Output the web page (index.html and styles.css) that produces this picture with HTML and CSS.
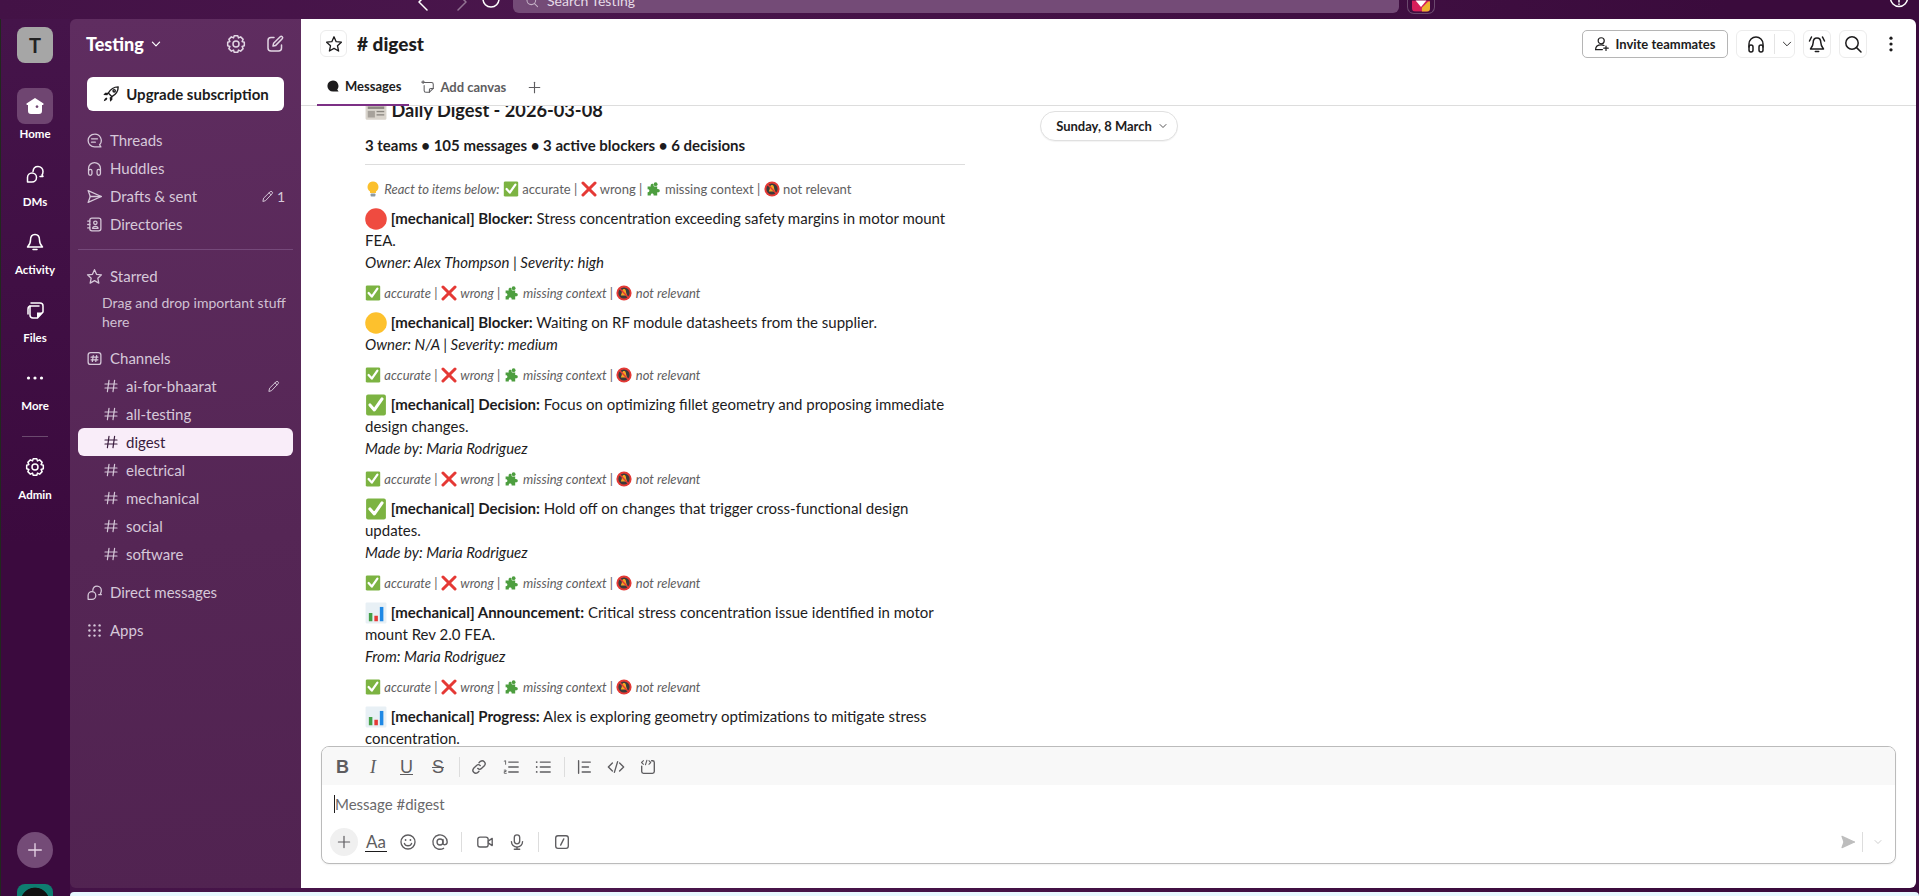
FILE: index.html
```html
<!DOCTYPE html>
<html lang="en">
<head>
    <meta charset="UTF-8">
    <meta name="viewport" content="width=device-width, initial-scale=1.0">
    <title>digest - Testing</title>
    <link rel="stylesheet" href="styles.css">
</head>
<body>
    <svg class="defs" aria-hidden="true">
        <symbol id="i-back" viewBox="0 0 20 19"><path d="M14 -6 L6 2 L14 10"/></symbol>
        <symbol id="i-fwd" viewBox="0 0 20 19"><path d="M6 -6 L14 2 L6 10"/></symbol>
        <symbol id="i-history" viewBox="0 0 20 19"><circle cx="10" cy="-1" r="8"/></symbol>
        <symbol id="i-help" viewBox="0 0 20 19"><circle cx="10" cy="-2" r="8.5"/><path d="M10 -1 V2"/><path d="M10 4 V4.6"/></symbol>
        <symbol id="i-search" viewBox="0 0 20 20"><circle cx="9" cy="9" r="6.2"/><path d="M13.6 13.6 L18 18"/></symbol>
        <symbol id="i-home" viewBox="0 0 20 20"><path class="solid" fill-rule="evenodd" d="M10 2 L18.5 7.6 Q19 8.3 18 9 L17 9 V15 Q17 18 14 18 H6 Q3 18 3 15 V9 L2 9 Q1 8.3 1.5 7.6 Z M12 9.2 a1.4 1.4 0 1 0 .01 0 Z"/></symbol>
        <symbol id="i-dms" viewBox="0 0 20 20"><path d="M8 7.5 C8.3 4 10.5 2.5 13 2.5 C16 2.5 18 5 18 7.5 C18 9 17.7 10 17 11 L18 12.5 H15"/><path d="M2.5 13.5 A4.5 4.5 0 1 1 7 18 H2.5 Z"/></symbol>
        <symbol id="i-bell" viewBox="0 0 20 20"><path d="M10 2.5 C6.5 2.5 5.5 5.5 5.5 8 C5.5 11 4.5 13 2.5 15 H17.5 C15.5 13 14.5 11 14.5 8 C14.5 5.5 13.5 2.5 10 2.5 Z"/><path d="M8 17.5 H12"/></symbol>
        <symbol id="i-bell-on" viewBox="0 0 20 20"><path d="M10 4 C7.2 4 6.2 6.5 6.2 8.6 C6.2 11 5.2 13 3.5 15 H16.5 C14.8 13 13.8 11 13.8 8.6 C13.8 6.5 12.8 4 10 4 Z"/><path d="M8.3 17.5 H11.7"/><path d="M2.5 7 L4.5 3"/><path d="M17.5 7 L15.5 3"/></symbol>
        <symbol id="i-files" viewBox="0 0 20 20"><path d="M6 3 H15 A3 3 0 0 1 18 6 V12 L12.5 18 H8 A3 3 0 0 1 5 15 V6"/><path d="M14 6 H6 A3 3 0 0 0 3 9 V14"/><path class="solid" d="M12 12.5 H18 L12.5 18 H12 Z"/></symbol>
        <symbol id="i-more" viewBox="0 0 20 20"><circle class="solid" cx="3.5" cy="10" r="1.6"/><circle class="solid" cx="10" cy="10" r="1.6"/><circle class="solid" cx="16.5" cy="10" r="1.6"/></symbol>
        <symbol id="i-kebab" viewBox="0 0 20 20"><circle class="solid" cx="10" cy="3.5" r="1.8"/><circle class="solid" cx="10" cy="10" r="1.8"/><circle class="solid" cx="10" cy="16.5" r="1.8"/></symbol>
        <symbol id="i-gear" viewBox="0 0 20 20"><path d="M8.23 1.69 L11.77 1.69 L12.53 3.9 L14.63 2.87 L17.13 5.37 L16.1 7.47 L18.31 8.23 L18.31 11.77 L16.1 12.53 L17.13 14.63 L14.63 17.13 L12.53 16.1 L11.77 18.31 L8.23 18.31 L7.47 16.1 L5.37 17.13 L2.87 14.63 L3.9 12.53 L1.69 11.77 L1.69 8.23 L3.9 7.47 L2.87 5.37 L5.37 2.87 L7.47 3.9 Z"/><circle cx="10" cy="10" r="3"/></symbol>
        <symbol id="i-compose" viewBox="0 0 20 20"><path d="M9 3.5 H6 A3 3 0 0 0 3 6.5 V14 A3 3 0 0 0 6 17 H13.5 A3 3 0 0 0 16.5 14 V11"/><path d="M8 12 L8.6 9.3 L15.2 2.8 A1.4 1.4 0 0 1 17.2 4.8 L10.7 11.4 Z"/></symbol>
        <symbol id="i-chevron" viewBox="0 0 20 20"><path d="M4 7 L10 13 L16 7"/></symbol>
        <symbol id="i-rocket" viewBox="0 0 20 20"><path d="M18 2 C13 2 9.5 4.5 7 9 L11 13 C15.5 10.5 18 7 18 2 Z"/><path class="solid" d="M7.5 8.5 H3.5 L1.5 11 L6 11.5 Z M11.5 12.5 V16.5 L9 18.5 L8.5 14 Z M5 14 C3.5 14.5 2.5 16 2 18 C4 17.5 5.5 16.5 6 15 Z"/><circle cx="13.5" cy="6.5" r="1.3"/></symbol>
        <symbol id="i-threads" viewBox="0 0 20 20"><path d="M10 2.5 A7.5 7.5 0 1 0 10 17.5 H17.5 L16 15 A7.5 7.5 0 0 0 10 2.5 Z"/><path d="M6.5 8 H13.5"/><path d="M6.5 12 H11"/></symbol>
        <symbol id="i-headphones" viewBox="0 0 20 20"><path d="M3 13 V10 A7 7 0 0 1 17 10 V13"/><rect x="3" y="11" width="4" height="7" rx="2"/><rect x="13" y="11" width="4" height="7" rx="2"/></symbol>
        <symbol id="i-send" viewBox="0 0 20 20"><path d="M2.5 3 L18 10 L2.5 17 L5 10 Z"/><path d="M5 10 H18"/></symbol>
        <symbol id="i-directory" viewBox="0 0 20 20"><rect x="4.5" y="2.5" width="13" height="15" rx="2.5"/><circle cx="11" cy="8" r="2"/><path d="M7.8 14.5 C8 11.5 14 11.5 14.2 14.5 Z"/><path d="M2 6 H4.5"/><path d="M2 10 H4.5"/><path d="M2 14 H4.5"/></symbol>
        <symbol id="i-pencil" viewBox="0 0 20 20"><path d="M3 17 L4 12.5 L14 2.8 A1.9 1.9 0 0 1 17 5.8 L7.4 16 Z"/><path d="M12.5 4.5 L15.5 7.5"/></symbol>
        <symbol id="i-star" viewBox="0 0 20 20"><path d="M10 2 L12.4 7.4 L18.2 8 L13.9 12 L15.1 17.8 L10 14.8 L4.9 17.8 L6.1 12 L1.8 8 L7.6 7.4 Z"/></symbol>
        <symbol id="i-channels" viewBox="0 0 20 20"><rect x="2.5" y="3" width="15" height="14" rx="3"/><path d="M8.5 6.5 L7.5 13.5"/><path d="M12.5 6.5 L11.5 13.5"/><path d="M6 8.5 H14"/><path d="M6 11.5 H14"/></symbol>
        <symbol id="i-hash" viewBox="0 0 20 20"><path d="M7.5 3 L5.5 17"/><path d="M14.5 3 L12.5 17"/><path d="M2.5 7.5 H17.5"/><path d="M2.5 12.5 H17.5"/></symbol>
        <symbol id="i-apps" viewBox="0 0 20 20"><g class="solid"><circle cx="4" cy="4" r="1.4"/><circle cx="10" cy="4" r="1.4"/><circle cx="16" cy="4" r="1.4"/><circle cx="4" cy="10" r="1.4"/><circle cx="10" cy="10" r="1.4"/><circle cx="16" cy="10" r="1.4"/><circle cx="4" cy="16" r="1.4"/><circle cx="10" cy="16" r="1.4"/><circle cx="16" cy="16" r="1.4"/></g></symbol>
        <symbol id="i-plus" viewBox="0 0 20 20"><path d="M10 3 V17"/><path d="M3 10 H17"/></symbol>
        <symbol id="i-bubble" viewBox="0 0 20 20"><path class="solid" d="M10 2 A8 8 0 1 0 10 18 H18 L16 15 A8 8 0 0 0 10 2 Z"/></symbol>
        <symbol id="i-canvas" viewBox="0 0 20 20"><path d="M5 3.5 H15 A2.5 2.5 0 0 1 17.5 6 V12 L12 17.5 H7 A2.5 2.5 0 0 1 4.5 15 V8"/><path d="M12 17.5 V14 A2 2 0 0 1 14 12 H17.5"/><path d="M3 1 V5"/><path d="M1 3 H5"/></symbol>
        <symbol id="i-invite" viewBox="0 0 20 20"><circle cx="9" cy="6" r="3.8"/><path d="M2 17 C2 12.5 5 11 9 11 C10.5 11 11.5 11.2 12.5 11.8"/><path d="M2 17 H10.5"/><path d="M15 12.5 V18"/><path d="M12.2 15.2 H17.8"/></symbol>
        <symbol id="i-link" viewBox="0 0 20 20"><path d="M8.5 11.5 A3.2 3.2 0 0 0 13 11.5 L16.2 8.3 A3.3 3.3 0 0 0 11.6 3.7 L10 5.3"/><path d="M11.5 8.5 A3.2 3.2 0 0 0 7 8.5 L3.8 11.7 A3.3 3.3 0 0 0 8.4 16.3 L10 14.7"/></symbol>
        <symbol id="i-ol" viewBox="0 0 20 20"><path d="M7.5 4.5 H18"/><path d="M7.5 10 H18"/><path d="M7.5 15.5 H18"/><path d="M2.5 3.5 L4 3 V7" stroke-width="1"/><path d="M2.5 13.5 H4.5 V15 H2.5 V17 H4.8" stroke-width="1"/></symbol>
        <symbol id="i-ul" viewBox="0 0 20 20"><path d="M7 4.5 H18"/><path d="M7 10 H18"/><path d="M7 15.5 H18"/><circle class="solid" cx="3" cy="4.5" r="1"/><circle class="solid" cx="3" cy="10" r="1"/><circle class="solid" cx="3" cy="15.5" r="1"/></symbol>
        <symbol id="i-quote" viewBox="0 0 20 20"><path d="M4 3 V17"/><path d="M8 4.5 H17"/><path d="M8 10 H15"/><path d="M8 15.5 H17"/></symbol>
        <symbol id="i-code" viewBox="0 0 20 20"><path d="M6 5.5 L1.5 10 L6 14.5"/><path d="M14 5.5 L18.5 10 L14 14.5"/><path d="M11.8 4 L8.2 16"/></symbol>
        <symbol id="i-codeblock" viewBox="0 0 20 20"><path d="M3 9 V15 A2 2 0 0 0 5 17 H15 A2 2 0 0 0 17 15 V5 A2 2 0 0 0 15 3 H14"/><path d="M5 3 L2.8 5 L5 7" stroke-width="1.2"/><path d="M11 3 L13 5 L11 7" stroke-width="1.2"/><path d="M8.8 2.5 L7.2 7.5" stroke-width="1.2"/></symbol>
        <symbol id="i-smile" viewBox="0 0 20 20"><circle cx="10" cy="10" r="7.8"/><path d="M6 11.5 C7 15 13 15 14 11.5"/><circle class="solid" cx="7.3" cy="7.8" r="1"/><circle class="solid" cx="12.7" cy="7.8" r="1"/></symbol>
        <symbol id="i-at" viewBox="0 0 20 20"><circle cx="10" cy="10" r="3.3"/><path d="M13.3 7 V11.5 C13.3 14 18 13.5 18 10 A8 8 0 1 0 14 17"/></symbol>
        <symbol id="i-video" viewBox="0 0 20 20"><rect x="2" y="4.5" width="11.5" height="11" rx="2.5"/><path d="M13.5 9 L18 6 V14 L13.5 11"/></symbol>
        <symbol id="i-mic" viewBox="0 0 20 20"><rect x="7" y="2" width="6" height="10" rx="3"/><path d="M3.8 9.5 A6.2 6.2 0 0 0 16.2 9.5"/><path d="M10 15.7 V18"/><path d="M7 18 H13"/></symbol>
        <symbol id="i-slash" viewBox="0 0 20 20"><rect x="3" y="3" width="14" height="14" rx="2.5"/><path d="M12 6.5 L8.5 13.5"/></symbol>

        <symbol id="e-news" viewBox="0 0 20 20"><g class="flat"><rect x="0.5" y="3" width="19" height="14" rx="1" fill="#d9d4cc"/><rect x="2.5" y="5" width="15" height="2.2" fill="#8b8780"/><rect x="2.5" y="9" width="6.5" height="6" fill="#a7a29b"/><rect x="10.5" y="9" width="7" height="1.2" fill="#8b8780"/><rect x="10.5" y="12" width="7" height="1.2" fill="#8b8780"/></g></symbol>
        <symbol id="e-bulb" viewBox="0 0 20 20"><g class="flat"><path d="M10 0.5 A6.8 6.8 0 0 0 6.3 13 V15 H13.7 V13 A6.8 6.8 0 0 0 10 0.5 Z" fill="#fbc02d"/><rect x="7" y="15.5" width="6" height="4" rx="1" fill="#8d9aa3"/></g></symbol>
        <symbol id="e-check" viewBox="0 0 20 20"><g class="flat"><rect x="1" y="0.5" width="18" height="19" rx="1.8" fill="#7cb342"/><path d="M4.5 10 L8.5 14.5 L15.5 4.5" fill="none" stroke="#fff" stroke-width="2.8"/></g></symbol>
        <symbol id="e-cross" viewBox="0 0 20 20"><g class="flat"><path d="M2.5 2.5 L17.5 17.5" fill="none" stroke="#e53935" stroke-width="3.8"/><path d="M17.5 2.5 L2.5 17.5" fill="none" stroke="#e53935" stroke-width="3.8"/></g></symbol>
        <symbol id="e-puzzle" viewBox="0 0 20 20"><g class="flat"><path d="M2 7 H6 C4.5 3 10 2 9.5 6 L10 7 H14 V10 C18 9 18.5 15 14.5 14 L14 14.5 V18 H9.5 C10 15 5.5 15 6 18 H2 V14 C5 14.5 5 10 2 10.5 Z" fill="#4d9e3f"/><circle cx="12" cy="4" r="2.4" fill="#4d9e3f"/></g></symbol>
        <symbol id="e-nobell" viewBox="0 0 20 20"><g class="flat"><circle cx="10" cy="10" r="9.5" fill="#e53935"/><circle cx="10" cy="10" r="7" fill="#3c3a3a"/><path d="M10 5 C7.5 5 7.5 8 7.2 10 L6 13 H14 L12.8 10 C12.5 8 12.5 5 10 5 Z" fill="#f5a623"/><path d="M4.5 4.5 L15.5 15.5" fill="none" stroke="#e53935" stroke-width="1.8"/></g></symbol>
        <symbol id="e-red" viewBox="0 0 20 20"><g class="flat"><circle cx="10" cy="10" r="9.8" fill="#ef4b40"/></g></symbol>
        <symbol id="e-yellow" viewBox="0 0 20 20"><g class="flat"><circle cx="10" cy="10" r="9.8" fill="#fdc12d"/></g></symbol>
        <symbol id="e-chart" viewBox="0 0 20 20"><g class="flat"><rect x="0.5" y="0.5" width="19" height="19" rx="1" fill="#e8f0f5"/><rect x="3.5" y="10" width="3.2" height="7.5" fill="#43a047"/><rect x="8.5" y="12.5" width="3.2" height="5" fill="#e53935"/><rect x="13.5" y="4.5" width="3.2" height="13" fill="#1e88e5"/></g></symbol>
    </svg>

    <div class="app">
        <div class="topbar">
            <svg class="ic nav-ic"><use href="#i-back"/></svg>
            <svg class="ic nav-ic dim"><use href="#i-fwd"/></svg>
            <svg class="ic nav-ic history"><use href="#i-history"/></svg>
            <div class="search">
                <svg class="ic ic-14"><use href="#i-search"/></svg>
                <span>Search Testing</span>
            </div>
            <div class="app-badge">
                <svg class="app-badge-mark" viewBox="0 0 20 12">
                    <rect width="20" height="12" fill="#d81e5b"/>
                    <polygon points="4,0 16,0 10,7" fill="#fff"/>
                    <polygon points="11,8 18,1 20,1 20,12 11,12" fill="#ecb22e"/>
                </svg>
            </div>
            <svg class="ic nav-ic help"><use href="#i-help"/></svg>
        </div>

        <nav class="rail">
            <div class="workspace-tile">T</div>
            <div class="rail-item active">
                <div class="rail-icon"><svg class="ic ic-20"><use href="#i-home"/></svg></div>
                <span>Home</span>
            </div>
            <div class="rail-item">
                <div class="rail-icon"><svg class="ic ic-20"><use href="#i-dms"/></svg></div>
                <span>DMs</span>
            </div>
            <div class="rail-item">
                <div class="rail-icon"><svg class="ic ic-20"><use href="#i-bell"/></svg></div>
                <span>Activity</span>
            </div>
            <div class="rail-item">
                <div class="rail-icon"><svg class="ic ic-20"><use href="#i-files"/></svg></div>
                <span>Files</span>
            </div>
            <div class="rail-item">
                <div class="rail-icon"><svg class="ic ic-20"><use href="#i-more"/></svg></div>
                <span>More</span>
            </div>
            <div class="rail-divider"></div>
            <div class="rail-item">
                <div class="rail-icon"><svg class="ic ic-20"><use href="#i-gear"/></svg></div>
                <span>Admin</span>
            </div>
            <div class="rail-add"><svg class="ic ic-18"><use href="#i-plus"/></svg></div>
            <div class="rail-avatar"></div>
        </nav>

        <aside class="sidebar">
            <div class="side-head">
                <span class="side-title">Testing</span>
                <svg class="ic ic-12 side-caret"><use href="#i-chevron"/></svg>
                <svg class="ic ic-20 side-gear"><use href="#i-gear"/></svg>
                <svg class="ic ic-20 side-compose"><use href="#i-compose"/></svg>
            </div>
            <button class="upgrade"><svg class="ic ic-18"><use href="#i-rocket"/></svg>Upgrade subscription</button>

            <div class="side-row"><svg class="ic row-ic"><use href="#i-threads"/></svg>Threads</div>
            <div class="side-row"><svg class="ic row-ic"><use href="#i-headphones"/></svg>Huddles</div>
            <div class="side-row"><svg class="ic row-ic"><use href="#i-send"/></svg>Drafts &amp; sent
                <span class="side-count"><svg class="ic ic-13"><use href="#i-pencil"/></svg>1</span>
            </div>
            <div class="side-row"><svg class="ic row-ic"><use href="#i-directory"/></svg>Directories</div>
            <div class="side-rule"></div>

            <div class="side-row"><svg class="ic row-ic"><use href="#i-star"/></svg>Starred</div>
            <p class="side-hint">Drag and drop important stuff here</p>

            <div class="side-row"><svg class="ic row-ic"><use href="#i-channels"/></svg>Channels</div>
            <div class="side-row channel"><svg class="ic ic-16"><use href="#i-hash"/></svg>ai-for-bhaarat
                <span class="side-count edit"><svg class="ic ic-13"><use href="#i-pencil"/></svg></span>
            </div>
            <div class="side-row channel"><svg class="ic ic-16"><use href="#i-hash"/></svg>all-testing</div>
            <div class="side-row channel selected"><svg class="ic ic-16"><use href="#i-hash"/></svg>digest</div>
            <div class="side-row channel"><svg class="ic ic-16"><use href="#i-hash"/></svg>electrical</div>
            <div class="side-row channel"><svg class="ic ic-16"><use href="#i-hash"/></svg>mechanical</div>
            <div class="side-row channel"><svg class="ic ic-16"><use href="#i-hash"/></svg>social</div>
            <div class="side-row channel"><svg class="ic ic-16"><use href="#i-hash"/></svg>software</div>

            <div class="side-row spaced"><svg class="ic row-ic"><use href="#i-dms"/></svg>Direct messages</div>
            <div class="side-row spaced"><svg class="ic row-ic"><use href="#i-apps"/></svg>Apps</div>
        </aside>

        <main class="main">
            <header class="channel-head">
                <div class="channel-top">
                    <button class="star-btn"><svg class="ic ic-18"><use href="#i-star"/></svg></button>
                    <h1 class="channel-name"># digest</h1>
                    <div class="channel-actions">
                        <button class="invite"><svg class="ic ic-16"><use href="#i-invite"/></svg>Invite teammates</button>
                        <div class="huddle">
                            <svg class="ic ic-20"><use href="#i-headphones"/></svg>
                            <span class="huddle-sep"></span>
                            <svg class="ic ic-12"><use href="#i-chevron"/></svg>
                        </div>
                        <button class="head-btn"><svg class="ic ic-20"><use href="#i-bell-on"/></svg></button>
                        <button class="head-btn"><svg class="ic ic-20"><use href="#i-search"/></svg></button>
                        <svg class="ic ic-18 kebab"><use href="#i-kebab"/></svg>
                    </div>
                </div>
                <div class="tabs">
                    <div class="tab active"><svg class="ic ic-14"><use href="#i-bubble"/></svg>Messages</div>
                    <div class="tab"><svg class="ic ic-14"><use href="#i-canvas"/></svg>Add canvas</div>
                    <svg class="ic ic-15 tab-plus"><use href="#i-plus"/></svg>
                </div>
            </header>

            <section class="messages">
                <div class="date-pill">Sunday, 8 March <svg class="ic ic-10"><use href="#i-chevron"/></svg></div>
                <article class="digest">
                    <h2 class="digest-title"><svg class="emoji big"><use href="#e-news"/></svg> Daily Digest - 2026-03-08</h2>
                    <p class="digest-summary">3 teams • 105 messages • 3 active blockers • 6 decisions</p>
                    <div class="digest-rule"></div>

                    <p class="react"><svg class="emoji"><use href="#e-bulb"/></svg> <em>React to items below:</em> <svg class="emoji"><use href="#e-check"/></svg> accurate | <svg class="emoji"><use href="#e-cross"/></svg> wrong | <svg class="emoji"><use href="#e-puzzle"/></svg> missing context | <svg class="emoji"><use href="#e-nobell"/></svg> not relevant</p>

                    <p class="item"><svg class="emoji big"><use href="#e-red"/></svg> <b>[mechanical] Blocker:</b> Stress concentration exceeding safety margins in motor mount FEA.<br><em>Owner: Alex Thompson | Severity: high</em></p>
                    <p class="react"><svg class="emoji"><use href="#e-check"/></svg> <em>accurate</em> | <svg class="emoji"><use href="#e-cross"/></svg> <em>wrong</em> | <svg class="emoji"><use href="#e-puzzle"/></svg> <em>missing context</em> | <svg class="emoji"><use href="#e-nobell"/></svg> <em>not relevant</em></p>

                    <p class="item"><svg class="emoji big"><use href="#e-yellow"/></svg> <b>[mechanical] Blocker:</b> Waiting on RF module datasheets from the supplier.<br><em>Owner: N/A | Severity: medium</em></p>
                    <p class="react"><svg class="emoji"><use href="#e-check"/></svg> <em>accurate</em> | <svg class="emoji"><use href="#e-cross"/></svg> <em>wrong</em> | <svg class="emoji"><use href="#e-puzzle"/></svg> <em>missing context</em> | <svg class="emoji"><use href="#e-nobell"/></svg> <em>not relevant</em></p>

                    <p class="item"><svg class="emoji big"><use href="#e-check"/></svg> <b>[mechanical] Decision:</b> Focus on optimizing fillet geometry and proposing immediate design changes.<br><em>Made by: Maria Rodriguez</em></p>
                    <p class="react"><svg class="emoji"><use href="#e-check"/></svg> <em>accurate</em> | <svg class="emoji"><use href="#e-cross"/></svg> <em>wrong</em> | <svg class="emoji"><use href="#e-puzzle"/></svg> <em>missing context</em> | <svg class="emoji"><use href="#e-nobell"/></svg> <em>not relevant</em></p>

                    <p class="item"><svg class="emoji big"><use href="#e-check"/></svg> <b>[mechanical] Decision:</b> Hold off on changes that trigger cross-functional design updates.<br><em>Made by: Maria Rodriguez</em></p>
                    <p class="react"><svg class="emoji"><use href="#e-check"/></svg> <em>accurate</em> | <svg class="emoji"><use href="#e-cross"/></svg> <em>wrong</em> | <svg class="emoji"><use href="#e-puzzle"/></svg> <em>missing context</em> | <svg class="emoji"><use href="#e-nobell"/></svg> <em>not relevant</em></p>

                    <p class="item"><svg class="emoji big"><use href="#e-chart"/></svg> <b>[mechanical] Announcement:</b> Critical stress concentration issue identified in motor mount Rev 2.0 FEA.<br><em>From: Maria Rodriguez</em></p>
                    <p class="react"><svg class="emoji"><use href="#e-check"/></svg> <em>accurate</em> | <svg class="emoji"><use href="#e-cross"/></svg> <em>wrong</em> | <svg class="emoji"><use href="#e-puzzle"/></svg> <em>missing context</em> | <svg class="emoji"><use href="#e-nobell"/></svg> <em>not relevant</em></p>

                    <p class="item"><svg class="emoji big"><use href="#e-chart"/></svg> <b>[mechanical] Progress:</b> Alex is exploring geometry optimizations to mitigate stress concentration.</p>
                </article>
            </section>

            <div class="composer">
                <div class="format-bar">
                    <span class="fmt fmt-b">B</span>
                    <span class="fmt fmt-i">I</span>
                    <span class="fmt fmt-u">U</span>
                    <span class="fmt fmt-s">S</span>
                    <span class="bar-sep"></span>
                    <svg class="ic ic-18 tool"><use href="#i-link"/></svg>
                    <svg class="ic ic-18 tool"><use href="#i-ol"/></svg>
                    <svg class="ic ic-18 tool"><use href="#i-ul"/></svg>
                    <span class="bar-sep"></span>
                    <svg class="ic ic-18 tool"><use href="#i-quote"/></svg>
                    <svg class="ic ic-18 tool"><use href="#i-code"/></svg>
                    <svg class="ic ic-18 tool"><use href="#i-codeblock"/></svg>
                </div>
                <div class="message-input"><span class="caret"></span>Message #digest</div>
                <div class="input-bar">
                    <span class="attach"><svg class="ic ic-16"><use href="#i-plus"/></svg></span>
                    <span class="aa">Aa</span>
                    <svg class="ic ic-18 tool"><use href="#i-smile"/></svg>
                    <svg class="ic ic-18 tool"><use href="#i-at"/></svg>
                    <span class="bar-sep"></span>
                    <svg class="ic ic-18 tool"><use href="#i-video"/></svg>
                    <svg class="ic ic-18 tool"><use href="#i-mic"/></svg>
                    <span class="bar-sep"></span>
                    <svg class="ic ic-18 tool"><use href="#i-slash"/></svg>
                    <div class="send">
                        <svg class="ic ic-16 send-ic"><use href="#i-send"/></svg>
                        <span class="bar-sep"></span>
                        <svg class="ic ic-10"><use href="#i-chevron"/></svg>
                    </div>
                </div>
            </div>
        </main>

        <div class="bottom-strip"></div>
    </div>
</body>
</html>
```

FILE: styles.css
```css
* {
    box-sizing: border-box;
}
body {
    margin: 0;
    height: 896px;
    overflow: hidden;
    font-family: Lato, "Noto Sans", sans-serif;
    color: #1d1c1d;
    background: linear-gradient(90deg, #431246 0%, #4a164c 30%, #3a0b3c 90%);
    text-rendering: optimizeLegibility;
}
button {
    font-family: inherit;
}
p, h1, h2 {
    margin: 0;
}
.defs {
    display: none;
}

/* icons */
.ic {
    fill: none;
    stroke: currentColor;
    stroke-width: 1.5;
    stroke-linecap: round;
    stroke-linejoin: round;
    flex-shrink: 0;
}
.ic .solid, .solid {
    fill: currentColor;
    stroke: none;
}
.ic-10 { width: 10px; height: 10px; }
.ic-12 { width: 12px; height: 12px; }
.ic-13 { width: 13px; height: 13px; }
.ic-14 { width: 14px; height: 14px; }
.ic-15 { width: 15px; height: 15px; }
.ic-16 { width: 16px; height: 16px; }
.ic-18 { width: 18px; height: 18px; }
.ic-20 { width: 20px; height: 20px; }

.emoji {
    display: inline-block;
    width: 16px;
    height: 16px;
    margin: -6px 0 -3px;
    fill: none;
    stroke: none;
    stroke-linecap: round;
    stroke-linejoin: round;
}
.emoji.big {
    width: 22px;
    height: 22px;
    margin: -8px 0 -6px;
}

.app {
    display: grid;
    grid-template-columns: 70px 231px 1615px 3px;
    grid-template-rows: 19px 869px 8px;
    height: 896px;
}

/* top bar, cut off by the screen edge */
.topbar {
    grid-column: 1 / -1;
    display: flex;
    align-items: flex-start;
    height: 19px;
    padding-left: 413px;
    overflow: hidden;
    color: #fff;
}
.nav-ic {
    width: 20px;
    height: 19px;
}
.nav-ic.dim {
    margin-left: 19px;
    opacity: 0.4;
}
.nav-ic.history {
    margin-left: 9px;
}
.search {
    display: flex;
    align-items: center;
    gap: 8px;
    width: 886px;
    height: 13px;
    margin-left: 12px;
    padding-left: 12px;
    background: #744b77;
    border-radius: 0 0 6px 6px;
    overflow: hidden;
    font-size: 14px;
    color: #e6dbe7;
}
.search .ic {
    margin-top: -12px;
    opacity: 0.7;
}
.search span {
    line-height: 16px;
    margin-top: -12px;
}
.app-badge {
    width: 28px;
    height: 14px;
    margin-left: 8px;
    padding: 0 4px;
    border: 1px solid #6b4a6e;
    border-top: none;
    border-radius: 0 0 7px 7px;
}
.app-badge-mark {
    display: block;
    width: 18px;
    height: 12px;
    border-radius: 0 0 4px 4px;
}
.nav-ic.help {
    margin-left: auto;
    margin-right: 10px;
}

/* far left rail */
.rail {
    grid-column: 1;
    grid-row: 2 / 4;
    display: flex;
    flex-direction: column;
    align-items: center;
    padding: 8px 1px 0 0;
    overflow: hidden;
    color: #fff;
    border-left: 1px solid #22281f;
    background: linear-gradient(180deg, #45144a 0%, #3b0a3e 60%);
}
.workspace-tile {
    width: 36px;
    height: 36px;
    margin-bottom: 25px;
    flex-shrink: 0;
    display: flex;
    align-items: center;
    justify-content: center;
    background: #a6a6a6;
    color: #222;
    border-radius: 8px;
    font-size: 20px;
    font-weight: 700;
}
.rail-item {
    height: 68px;
    flex-shrink: 0;
    display: flex;
    flex-direction: column;
    align-items: center;
    font-size: 11.5px;
    font-weight: 700;
    line-height: 20px;
}
.rail-icon {
    width: 36px;
    height: 36px;
    display: flex;
    align-items: center;
    justify-content: center;
    border-radius: 8px;
}
.rail-item.active .rail-icon {
    background: #6f4571;
}
.rail-divider {
    width: 26px;
    height: 1px;
    flex-shrink: 0;
    margin: 8px 0 12px;
    background: #6b4a6e;
}
.rail-add {
    width: 36px;
    height: 36px;
    flex-shrink: 0;
    margin-top: auto;
    display: flex;
    align-items: center;
    justify-content: center;
    border-radius: 50%;
    background: #744b77;
    color: #e6d5e6;
}
.rail-avatar {
    width: 36px;
    height: 12px;
    flex-shrink: 0;
    margin-top: 16px;
    border-radius: 8px 8px 0 0;
    background: radial-gradient(ellipse at 50% 150%, #111 0 55%, #0e7d70 58%);
}

/* channel sidebar */
.sidebar {
    grid-column: 2;
    grid-row: 2;
    padding: 0 8px;
    border-radius: 6px 0 0 6px;
    color: #d6c8d9;
    background: linear-gradient(175deg, #5f2d60 0%, #552655 60%, #512351 100%);
}
.side-head {
    display: flex;
    align-items: center;
    height: 50px;
    padding-left: 8px;
    color: #fff;
}
.side-title {
    font-size: 18px;
    font-weight: 900;
}
.side-caret {
    margin-left: 6px;
    stroke-width: 2;
}
.side-gear {
    margin-left: auto;
    color: #e2d6e4;
}
.side-compose {
    margin: 0 8px 0 19px;
    color: #e2d6e4;
}
.upgrade {
    display: flex;
    align-items: center;
    justify-content: center;
    gap: 6px;
    width: 197px;
    height: 34px;
    margin: 8px 0 15px 9px;
    border: none;
    border-radius: 6px;
    background: #fff;
    color: #1d1c1d;
    font-size: 15px;
    font-weight: 700;
}
.side-row {
    position: relative;
    display: flex;
    align-items: center;
    gap: 7px;
    height: 28px;
    padding-left: 8px;
    font-size: 15px;
    border-radius: 6px;
}
.row-ic {
    width: 17px;
    height: 17px;
}
.side-row.channel {
    padding-left: 25px;
}
.side-row.selected {
    background: #f9edf9;
    color: #391b3d;
}
.side-row.spaced {
    margin-top: 10px;
}
.side-count {
    display: flex;
    align-items: center;
    gap: 3px;
    margin-left: auto;
    margin-right: 8px;
    font-size: 14px;
}
.side-count.edit {
    margin-right: 13px;
}
.side-rule {
    height: 1px;
    margin: 11px 0 12px;
    background: #75497a;
}
.side-hint {
    margin: 3px 0 13px 24px;
    font-size: 14px;
    line-height: 19px;
    color: #d0c1d3;
}

/* main pane */
.main {
    grid-column: 3;
    grid-row: 2;
    display: flex;
    flex-direction: column;
    min-height: 0;
    background: #fff;
    border-radius: 0 6px 6px 0;
    overflow: hidden;
}
.channel-head {
    height: 87px;
    flex-shrink: 0;
    border-bottom: 1px solid #ddd;
}
.channel-top {
    display: flex;
    align-items: center;
    height: 49px;
    padding: 0 16px 0 19px;
}
.star-btn {
    display: flex;
    align-items: center;
    justify-content: center;
    width: 27px;
    height: 27px;
    padding: 0;
    border: 1px solid #ececec;
    border-radius: 6px;
    background: #fff;
    color: #1d1c1d;
}
.channel-name {
    margin-left: 10px;
    font-size: 19px;
    font-weight: 900;
}
.channel-actions {
    display: flex;
    align-items: center;
    gap: 8px;
    margin-left: auto;
}
.invite {
    display: flex;
    align-items: center;
    justify-content: center;
    gap: 5px;
    width: 146px;
    height: 28px;
    padding: 0;
    border: 1px solid #b5b5b5;
    border-radius: 5px;
    background: #fff;
    color: #1d1c1d;
    font-size: 13px;
    font-weight: 700;
}
.huddle {
    display: flex;
    align-items: center;
    width: 59px;
    height: 28px;
    padding-left: 9px;
    border: 1px solid #ececec;
    border-radius: 6px;
}
.huddle-sep {
    width: 1px;
    height: 20px;
    margin: 0 6px 0 8px;
    background: #e4e4e4;
}
.head-btn {
    display: flex;
    align-items: center;
    justify-content: center;
    width: 28px;
    height: 28px;
    padding: 0;
    border: 1px solid #ececec;
    border-radius: 6px;
    background: #fff;
    color: #1d1c1d;
}
.kebab {
    margin-left: 7px;
}
.tabs {
    display: flex;
    align-items: stretch;
    height: 38px;
    padding-left: 16px;
}
.tab {
    display: flex;
    align-items: center;
    gap: 5px;
    padding: 0 8px 0 9px;
    margin-right: 3px;
    font-size: 13px;
    font-weight: 700;
    color: #5e5d60;
    height: 38px;
}
.tab.active {
    color: #1d1c1d;
    border-bottom: 2px solid #7c3085;
}
.tab-plus {
    align-self: center;
    margin-left: 10px;
    color: #5e5d60;
}

.messages {
    position: relative;
    flex: 1;
    min-height: 0;
    overflow: hidden;
}
.date-pill {
    position: absolute;
    top: 5px;
    left: 50%;
    transform: translateX(-50%);
    display: flex;
    align-items: center;
    justify-content: center;
    gap: 6px;
    width: 138px;
    height: 30px;
    padding-left: 7px;
    background: #fff;
    border: 1px solid #e0e0e0;
    border-radius: 15px;
    box-shadow: 0 1px 1px rgba(0, 0, 0, 0.05);
    font-size: 13px;
    font-weight: 700;
}
.digest {
    width: 600px;
    margin: -9px 0 0 64px;
    font-size: 15px;
    line-height: 22px;
}
.digest-title {
    font-size: 18.2px;
    line-height: 26px;
    font-weight: 700;
}
.digest-summary {
    margin-top: 11px;
    font-weight: 700;
}
.digest-rule {
    height: 1px;
    margin: 8px 0 14px;
    background: #ddd;
}
.react {
    font-size: 13px;
    line-height: 20px;
    color: #616061;
}
.item {
    margin: 8px 0 10px;
}

/* message composer */
.composer {
    flex-shrink: 0;
    height: 118px;
    margin: 0 20px 24px 20px;
    display: flex;
    flex-direction: column;
    border: 1px solid #bbb;
    border-radius: 8px;
    overflow: hidden;
    box-shadow: 0 1px 2px rgba(0, 0, 0, 0.06);
    background: #fff;
    color: #5e5d60;
}
.format-bar {
    display: flex;
    align-items: center;
    height: 38px;
    padding: 2px 0 0 11px;
    background: #f8f8f8;
}
.fmt {
    width: 32px;
    padding-left: 3px;
    font-size: 18px;
    font-family: "Liberation Sans", sans-serif;
    color: #5e5d60;
}
.fmt-b {
    font-weight: 700;
}
.fmt-i {
    padding-left: 5px;
    font-style: italic;
    font-family: "Liberation Serif", serif;
}
.fmt-u {
    text-decoration: underline;
}
.fmt-s {
    text-decoration: line-through;
    font-weight: 400;
}
.bar-sep {
    width: 1px;
    height: 20px;
    background: #ddd;
    flex-shrink: 0;
    margin: 0 10px 0 -2px;
}
.tool {
    margin-right: 14px;
}
.message-input {
    display: flex;
    align-items: center;
    height: 38px;
    padding-left: 12px;
    font-size: 15px;
    color: #6a696b;
}
.caret {
    width: 1px;
    height: 18px;
    background: #1d1c1d;
}
.input-bar {
    display: flex;
    align-items: center;
    flex: 1;
    padding: 0 12px 2px 8px;
}
.input-bar .bar-sep {
    margin-right: 14px;
}
.attach {
    display: flex;
    align-items: center;
    justify-content: center;
    width: 28px;
    height: 28px;
    margin-right: 7px;
    border-radius: 50%;
    background: #f0f0f0;
}
.aa {
    width: 22px;
    margin-right: 12px;
    font-size: 17px;
    text-align: center;
    border-bottom: 1px solid #1d1c1d;
    line-height: 19px;
}
.send {
    display: flex;
    align-items: center;
    margin-left: auto;
    color: #bdbdbd;
}
.send-ic {
    margin-right: 6px;
}
.send .send-ic {
    fill: #bdbdbd;
}
.input-bar .send .bar-sep {
    margin: 0 10px 0 0;
}

.bottom-strip {
    grid-column: 2 / -1;
    grid-row: 3;
    height: 4px;
    margin-top: 4px;
    background: #e6f8ff;
    border-radius: 6px 6px 0 0;
}
```
